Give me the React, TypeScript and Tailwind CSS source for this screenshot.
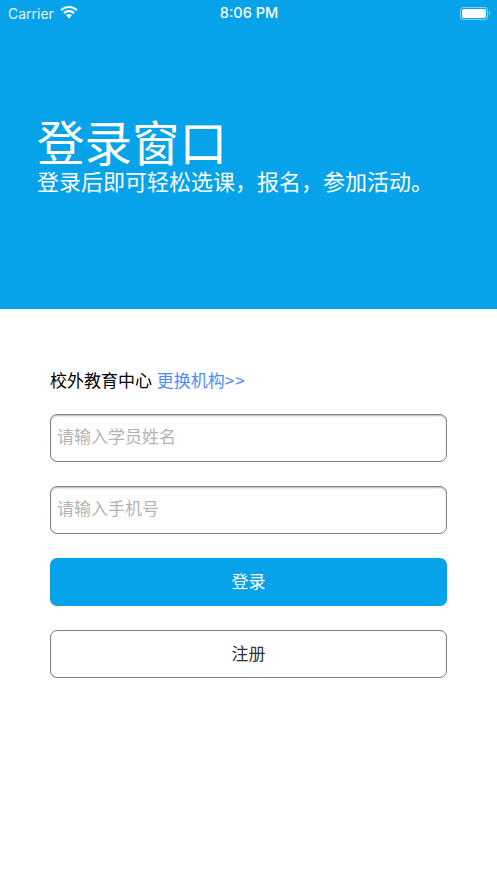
const cjk = "font-['Noto_Sans_CJK_SC','Liberation_Sans',sans-serif]";

function Wifi() {
  return (
    <svg width="18" height="13" viewBox="0 0 18 13" className="ml-[6px] mb-[2px]">
      <path
        fill="white"
        d="M9 0C5.700 0 2.700 1.300.5 3.400L2 5c1.800-1.800 4.300-2.900 7-2.900s5.200 1.100 7 2.900l1.500-1.600C15.300 1.300 12.300 0 9 0zM9 4C6.800 4 4.800 4.900 3.300 6.300l1.500 1.600C5.900 6.900 7.400 6.200 9 6.200s3.100.7 4.200 1.700l1.500-1.600C13.200 4.900 11.200 4 9 4zM9 8.100c-1.100 0-2.100.4-2.900 1.100L9 12.400l2.900-3.200C11.100 8.500 10.100 8.100 9 8.100z"
      />
    </svg>
  );
}

function StatusBar() {
  return (
    <div className="flex h-[26px] items-center justify-between pl-2 pr-[7px] font-['Inter','Liberation_Sans',sans-serif] text-white">
      <div className="flex w-[120px] items-center text-[14px]">
        <span className="opacity-90">Carrier</span>
        <Wifi />
      </div>
      <span className="text-[14.500px] font-medium">8:06 PM</span>
      <div className="flex w-[120px] items-center justify-end">
        <div className="flex h-[13px] w-[28px] items-center rounded-[3px] border border-white/50 p-[1px]">
          <div className="h-full w-full rounded-[2px] bg-white" />
        </div>
        <div className="ml-[1px] h-[4px] w-[1px] bg-white/50" />
      </div>
    </div>
  );
}

function TextInput({ placeholder }: { placeholder: string }) {
  return (
    <div className="flex h-[48px] items-center rounded-[7px] border border-[#808080] bg-white px-[6px] pb-[4px] shadow-[inset_0_2px_2px_-1px_rgba(0,0,0,0.25),inset_0_0_1px_rgba(0,0,0,0.3)]">
      <span className="text-[17px] text-[#b3b3b3]">{placeholder}</span>
    </div>
  );
}

export default function App() {
  return (
    <div className={`min-h-[883px] w-full bg-white ${cjk}`}>
      <header className="h-[309px] bg-[#06a2ea]">
        <StatusBar />
        <div className="pl-[37px] pt-[90px] text-white">
          <h1 className="text-[47.500px] leading-[50px] font-normal">登录窗口</h1>
          <p className="text-[22px] leading-[28px]">登录后即可轻松选课，报名，参加活动。</p>
        </div>
      </header>

      <main className="px-[50px] pt-[59px]">
        <p className="h-[24px] text-[17px] leading-[24px] text-black">
          校外教育中心 <span className="ml-[1px] text-[#4a8cff]">更换机构<span className="tracking-[1px]">&gt;&gt;</span></span>
        </p>
        <div className="mt-[22px] flex flex-col gap-[24px]">
          <TextInput placeholder="请输入学员姓名" />
          <TextInput placeholder="请输入手机号" />
          <button type="button" className="h-[48px] rounded-[7px] bg-[#06a2ea] pb-[2px] text-[17px] text-white">
            登录
          </button>
          <button type="button" className="h-[48px] rounded-[7px] border border-[#808080] bg-white pb-[2px] text-[17px] text-[#333] shadow-[inset_0_0_1px_rgba(0,0,0,0.3)]">
            注册
          </button>
        </div>
      </main>
    </div>
  );
}
